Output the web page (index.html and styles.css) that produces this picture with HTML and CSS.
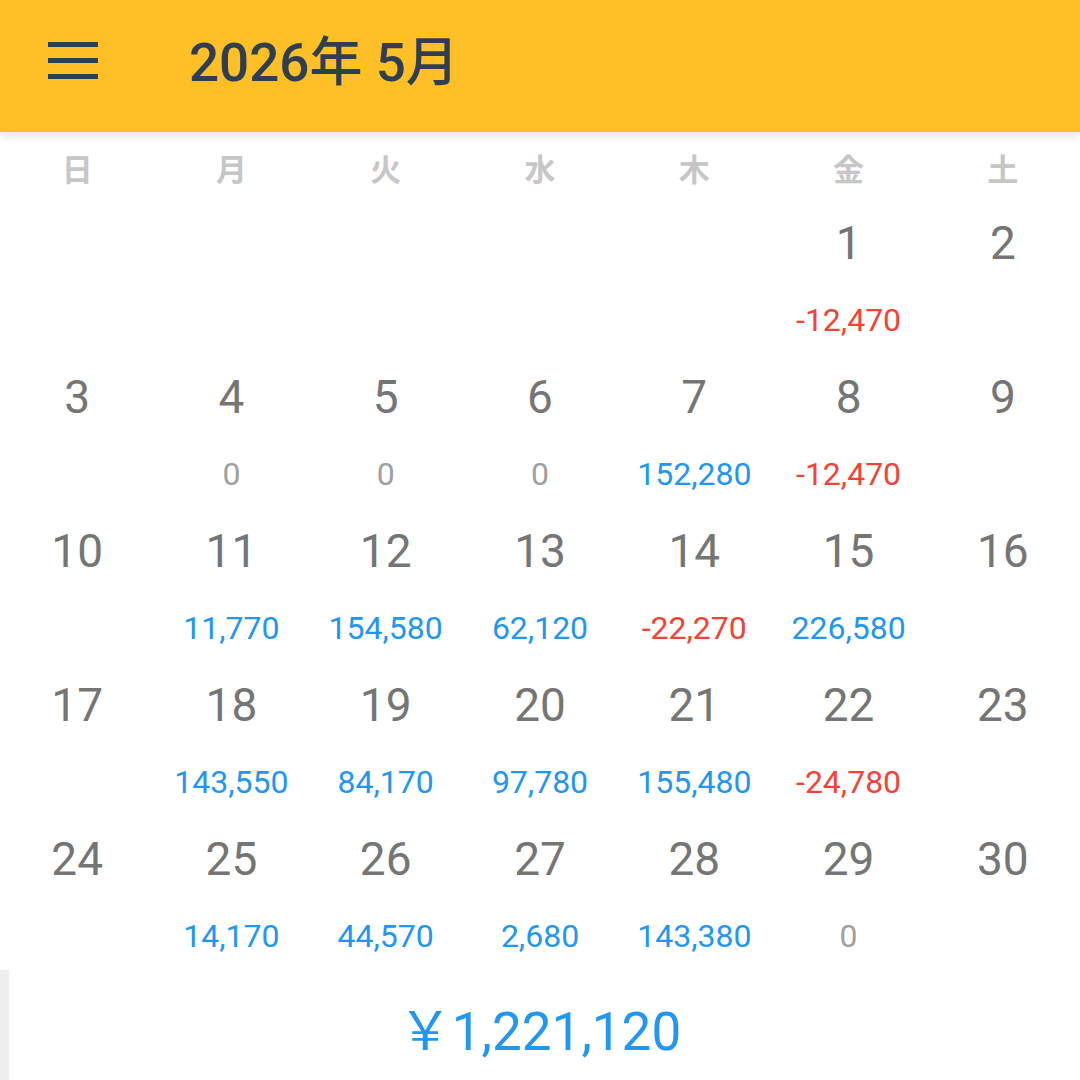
FILE: index.html
```html
<!DOCTYPE html>
<html lang="ja">
<head>
<meta charset="utf-8">
<link rel="stylesheet" href="styles.css">
</head>
<body>
<div class="app">
  <header class="appbar">
    <svg class="menu" width="50" height="38" viewBox="0 0 50 38">
      <rect x="0" y="0" width="50" height="5" fill="#2f3e50"/>
      <rect x="0" y="16" width="50" height="5" fill="#2f3e50"/>
      <rect x="0" y="32" width="50" height="5" fill="#2f3e50"/>
    </svg>
    <h1 class="title">2026年 5月</h1>
  </header>
  <div class="weekdays">
    <div>日</div><div>月</div><div>火</div><div>水</div><div>木</div><div>金</div><div>土</div>
  </div>
  <div class="grid">
    <div class="cell"></div><div class="cell"></div><div class="cell"></div><div class="cell"></div><div class="cell"></div>
    <div class="cell"><div class="day">1</div><div class="amt neg">-12,470</div></div>
    <div class="cell"><div class="day">2</div><div class="amt"></div></div>

    <div class="cell"><div class="day">3</div><div class="amt"></div></div>
    <div class="cell"><div class="day">4</div><div class="amt zero">0</div></div>
    <div class="cell"><div class="day">5</div><div class="amt zero">0</div></div>
    <div class="cell"><div class="day">6</div><div class="amt zero">0</div></div>
    <div class="cell"><div class="day">7</div><div class="amt pos">152,280</div></div>
    <div class="cell"><div class="day">8</div><div class="amt neg">-12,470</div></div>
    <div class="cell"><div class="day">9</div><div class="amt"></div></div>

    <div class="cell"><div class="day">10</div><div class="amt"></div></div>
    <div class="cell"><div class="day">11</div><div class="amt pos">11,770</div></div>
    <div class="cell"><div class="day">12</div><div class="amt pos">154,580</div></div>
    <div class="cell"><div class="day">13</div><div class="amt pos">62,120</div></div>
    <div class="cell"><div class="day">14</div><div class="amt neg">-22,270</div></div>
    <div class="cell"><div class="day">15</div><div class="amt pos">226,580</div></div>
    <div class="cell"><div class="day">16</div><div class="amt"></div></div>

    <div class="cell"><div class="day">17</div><div class="amt"></div></div>
    <div class="cell"><div class="day">18</div><div class="amt pos">143,550</div></div>
    <div class="cell"><div class="day">19</div><div class="amt pos">84,170</div></div>
    <div class="cell"><div class="day">20</div><div class="amt pos">97,780</div></div>
    <div class="cell"><div class="day">21</div><div class="amt pos">155,480</div></div>
    <div class="cell"><div class="day">22</div><div class="amt neg">-24,780</div></div>
    <div class="cell"><div class="day">23</div><div class="amt"></div></div>

    <div class="cell"><div class="day">24</div><div class="amt"></div></div>
    <div class="cell"><div class="day">25</div><div class="amt pos">14,170</div></div>
    <div class="cell"><div class="day">26</div><div class="amt pos">44,570</div></div>
    <div class="cell"><div class="day">27</div><div class="amt pos">2,680</div></div>
    <div class="cell"><div class="day">28</div><div class="amt pos">143,380</div></div>
    <div class="cell"><div class="day">29</div><div class="amt zero">0</div></div>
    <div class="cell"><div class="day">30</div><div class="amt"></div></div>
  </div>
  <div class="total">
    <span class="total-value">￥1,221,120</span>
  </div>
</div>
</body>
</html>
```

FILE: styles.css
```css
html, body {
  margin: 0;
  padding: 0;
  background: #ffffff;
}
body {
  font-family: Roboto, "Noto Sans CJK JP", sans-serif;
  width: 1080px;
  height: 1080px;
  overflow: hidden;
}
.app {
  display: flex;
  flex-direction: column;
  height: 1080px;
}
.appbar {
  height: 132px;
  flex: none;
  background: #ffbf27;
  display: flex;
  align-items: center;
  box-shadow: 0 3px 10px rgba(0, 0, 0, 0.13);
  position: relative;
  z-index: 1;
}
.menu {
  margin-left: 48px;
  margin-top: -10px;
  flex: none;
}
.title {
  margin: -6px 0 0 91px;
  font-family: Roboto, "Noto Sans CJK JP", sans-serif;
  font-size: 53px;
  font-weight: 500;
  color: #2f3e50;
  line-height: 1;
}
.weekdays {
  display: grid;
  grid-template-columns: repeat(7, 1fr);
  height: 68px;
  flex: none;
}
.weekdays div {
  text-align: center;
  font-family: "Noto Sans CJK JP", sans-serif;
  font-weight: 700;
  font-size: 31px;
  color: #c6c6c6;
  line-height: 40px;
  padding-top: 16px;
}
.grid {
  display: grid;
  grid-template-columns: repeat(7, 1fr);
  grid-auto-rows: 154px;
  flex: none;
}
.cell {
  display: flex;
  flex-direction: column;
  align-items: center;
}
.day {
  height: 86px;
  line-height: 86px;
  font-size: 46px;
  color: #757575;
}
.amt {
  height: 68px;
  line-height: 68px;
  font-size: 32px;
}
.pos { color: #2196f3; }
.neg { color: #f44336; }
.zero { color: #a0a0a0; }
.total {
  flex: 1;
  border-left: 9px solid #eeeeee;
  padding-right: 9px;
  display: flex;
  justify-content: center;
  align-items: flex-start;
}
.total-value {
  font-family: Roboto, "Noto Sans CJK JP", sans-serif;
  font-size: 53px;
  line-height: 64px;
  margin-top: 30px;
  color: #2196f3;
}
```
